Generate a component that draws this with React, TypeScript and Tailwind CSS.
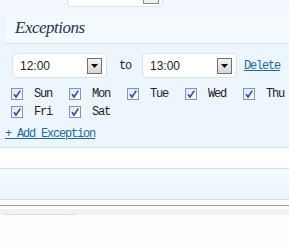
import React from "react";

const mono = { fontFamily: '"Liberation Mono", "DejaVu Sans Mono", monospace' };

const Check: React.FC = () => (
  <span className="inline-flex h-[12px] w-[12px] items-center justify-center border border-[#8596a5] bg-gradient-to-br from-[#dfe6ee] to-white">
    <svg width="10" height="10" viewBox="0 0 10 10">
      <path d="M2 5.2 L4 8 L8.3 1.6" fill="none" stroke="#2a4bb8" strokeWidth="1.6" />
    </svg>
  </span>
);

const DayBox: React.FC<{ day: string }> = ({ day }) => (
  <label className="flex h-[12px] items-center gap-[11px]">
    <Check />
    <span className="text-[12px] leading-[12px] tracking-[-1.2px] text-[#222]" style={mono}>
      {day}
    </span>
  </label>
);

const TimeSelect: React.FC<{ value: string }> = ({ value }) => (
  <div className="flex h-[25px] w-[95px] items-center justify-between rounded-[4px] border border-[#d3e4ee] bg-white pl-[7px] pr-[4px]">
    <span className="text-[12px] text-[#222]" style={{ fontFamily: '"Liberation Sans", sans-serif' }}>
      {value}
    </span>
    <span className="flex h-[16px] w-[15px] items-center justify-center border border-[#707070] bg-gradient-to-b from-[#f4f4f4] to-[#d6d6d6]">
      <svg width="7" height="4" viewBox="0 0 7 4">
        <path d="M0 0 H7 L3.5 4 Z" fill="#111" />
      </svg>
    </span>
  </div>
);

export default function App() {
  return (
    <div className="flex h-[245px] w-[289px] flex-col overflow-hidden bg-white">
      {/* top strip with partial field */}
      <div className="h-[13px] shrink-0 bg-[#f2f8fd]">
        <div className="ml-[67px] flex h-[7px] w-[96px] justify-end rounded-b-[4px] border border-t-0 border-[#d3e4ee] bg-white pr-[3px]">
          <span className="h-[4px] w-[16px] border border-t-0 border-[#8a8a8a] bg-[#efefef]" />
        </div>
      </div>

      {/* exceptions panel */}
      <div className="shrink-0 bg-[#eef6fd]">
        <div className="ml-[5px] flex h-[31px] items-center border-b border-[#d4e3ec] bg-gradient-to-b from-[#f3f9fe] to-[#f6fbff] pl-[10px]">
          <span
            className="text-[17px] italic tracking-[-0.5px] text-[#22354a]"
            style={{ fontFamily: '"Liberation Serif", serif' }}
          >
            Exceptions
          </span>
        </div>

        <div className="flex items-center pl-[12px] pt-[9px]">
          <TimeSelect value="12:00" />
          <span className="ml-[12px] w-[23px] text-[12px] tracking-[-1.2px] text-[#222]" style={mono}>
            to
          </span>
          <TimeSelect value="13:00" />
          <a className="ml-[7px] text-[12px] tracking-[-1.2px] text-[#1d6a9c] underline" style={mono}>
            Delete
          </a>
        </div>

        <div className="mt-[10px] grid w-[301px] grid-cols-[repeat(5,58px)] gap-y-[6px] pl-[11px]">
          {["Sun", "Mon", "Tue", "Wed", "Thu", "Fri", "Sat"].map((d) => (
            <DayBox key={d} day={d} />
          ))}
        </div>

        <div className="h-[29px] pl-[5px] pt-[7px] leading-[12px]">
          <a className="text-[12px] tracking-[-1.2px] text-[#1d6a9c] underline" style={mono}>
            + Add Exception
          </a>
        </div>
        <div className="h-px bg-[#cfe1ea]" />
      </div>

      <div className="h-[20px] shrink-0" />

      <div className="h-[32px] shrink-0 border-y border-[#c7dff0] bg-gradient-to-b from-[#f6fbff] to-[#ebf5fe]" />

      <div className="h-[5px] shrink-0" />
      <div className="h-px shrink-0 bg-[#9d9d9d]" />
      <div className="h-[3px] shrink-0" />
      <div className="flex h-[6px] shrink-0 items-end bg-[#f2f2f2]">
        <div className="ml-[3px] h-px w-[73px] bg-[#c9e3f0]" />
      </div>
      <div className="flex-1 bg-[#fefefe]" />
    </div>
  );
}
